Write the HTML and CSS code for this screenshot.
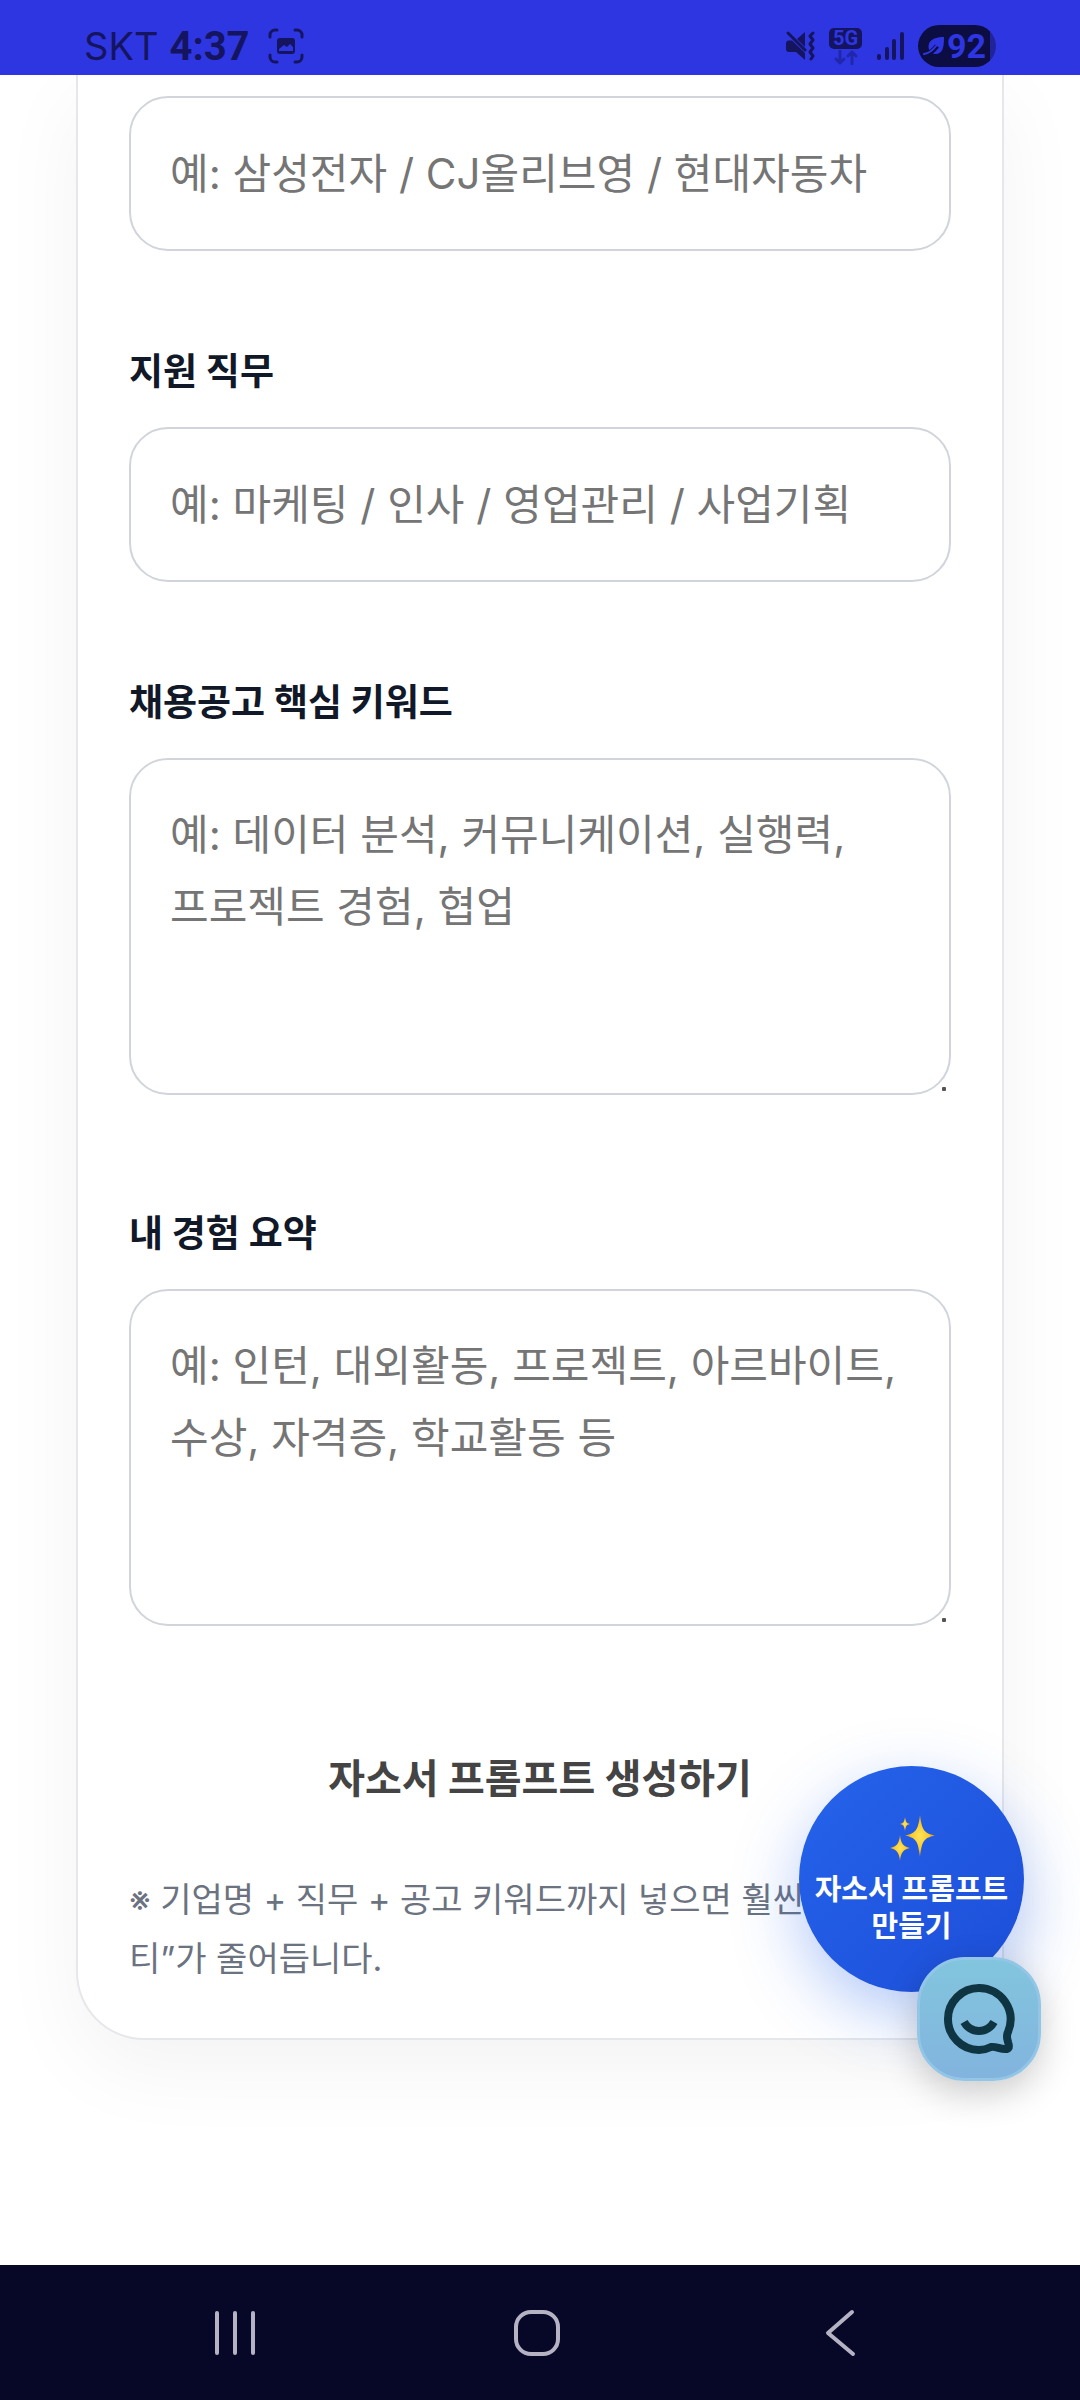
FILE: index.html
```html
<!DOCTYPE html>
<html lang="ko">
<head>
  <meta charset="UTF-8">
  <meta name="viewport" content="width=device-width, initial-scale=1">
  <title>자소서 프롬프트 생성기</title>
  <link rel="stylesheet" href="styles.css">
</head>
<body>
  <header class="status-bar">
    <div class="status-left">
      <span class="carrier">SKT</span>
      <span class="clock">4:37</span>
      <svg class="capture-icon" width="36" height="36" viewBox="0 0 36 36" fill="none" stroke="#14145f" stroke-width="3" stroke-linecap="round">
        <path d="M2 9V7a5 5 0 0 1 5-5h2M27 2h2a5 5 0 0 1 5 5v2M34 27v2a5 5 0 0 1-5 5h-2M9 34H7a5 5 0 0 1-5-5v-2"/>
        <rect x="9" y="10" width="18" height="16" rx="3" fill="#14145f" stroke="none"/>
        <path d="M11 23v-2l5-4 3 2 3-3 3 3v4z" fill="#2e36e2" stroke="none"/>
      </svg>
    </div>
    <div class="status-right">
      <svg width="30" height="30" viewBox="0 0 30 30">
        <path d="M20 1v15l-8-8zM1 9.500h6L20 22v7l-9-8H4q-3 0-3-3v-6q0-2 2-2.500z" fill="#14145f"/>
        <path d="M3 2l19 19" stroke="#2e36e2" stroke-width="3"/>
        <path d="M3 2l17 17" stroke="#14145f" stroke-width="3" stroke-linecap="round"/>
        <path d="M28 2l-3 3 3 4-3 4 3 4-3 4 3 4-2 3" fill="none" stroke="#14145f" stroke-width="3" stroke-linecap="round" stroke-linejoin="round"/>
      </svg>
      <div class="network">
        <span class="network-type">5G</span>
        <svg width="24" height="15" viewBox="0 0 24 15" fill="none" stroke="#2127ac" stroke-width="3" stroke-linecap="round" stroke-linejoin="round">
          <path d="M6 1v12M2 9l4 4 4-4M18 14V2M14 6l4-4 4 4"/>
        </svg>
      </div>
      <svg width="28" height="30" viewBox="0 0 28 30" stroke="#14145f" stroke-width="4" stroke-linecap="round">
        <path d="M3 25v2M11 18v9"/>
        <path d="M18 10v17M26 3v24"/>
      </svg>
      <div class="battery">
        <svg width="22" height="20" viewBox="0 0 22 20">
          <path d="M21 1c0 10-1 17-9 17-3 0-4-1-5-2C3 8 7 1 21 1z" fill="#2e36e2"/>
          <path d="M1 18c6 0 9-3 13-8" fill="none" stroke="#0c0d42" stroke-width="5"/>
          <path d="M1 18c6-1 9-4 12-8" fill="none" stroke="#2e36e2" stroke-width="2" stroke-linecap="round"/>
        </svg>
        <span>92</span>
      </div>
    </div>
  </header>

  <main class="page">
    <form class="card">
      <div class="field">
        <input type="text" id="company" aria-label="지원 기업" placeholder="예: 삼성전자 / CJ올리브영 / 현대자동차">
      </div>
      <div class="field">
        <label for="job">지원 직무</label>
        <input type="text" id="job" placeholder="예: 마케팅 / 인사 / 영업관리 / 사업기획">
      </div>
      <div class="field">
        <label for="keywords">채용공고 핵심 키워드</label>
        <div class="area">
          <textarea id="keywords" placeholder="예: 데이터 분석, 커뮤니케이션, 실행력, 프로젝트 경험, 협업"></textarea>
        </div>
      </div>
      <div class="field">
        <label for="experience">내 경험 요약</label>
        <div class="area">
          <textarea id="experience" placeholder="예: 인턴, 대외활동, 프로젝트, 아르바이트, 수상, 자격증, 학교활동 등"></textarea>
        </div>
      </div>
      <button type="button" class="generate">자소서 프롬프트 생성하기</button>
      <p class="note">※ 기업명 + 직무 + 공고 키워드까지 넣으면 훨씬<br>티”가 줄어듭니다.</p>
    </form>
  </main>

  <a href="#company" class="fab">
    <svg width="46" height="48" viewBox="0 0 46 48">
      <defs>
        <radialGradient id="gold">
          <stop offset="0" stop-color="#ffe35e"/>
          <stop offset="0.6" stop-color="#fbc926"/>
          <stop offset="1" stop-color="#d98a1c"/>
        </radialGradient>
      </defs>
      <g fill="url(#gold)">
        <path d="M31 1c2 14 3 18 15 20.500C34 24 33 28 31 43c-2-15-3-19-15-21.500C28 19 29 15 31 1z"/>
        <path d="M11 21c1 9 3 11 10 13-7 2-9 4-10 13-1-9-3-11-10-13 7-2 9-4 10-13z"/>
        <path d="M16 3c1 5 1 6 5 7-4 1-4 2-5 7-1-5-1-6-5-7 4-1 4-2 5-7z"/>
      </g>
    </svg>
    <span>자소서 프롬프트<br>만들기</span>
  </a>

  <button type="button" class="chat" aria-label="채팅 상담">
    <svg width="72" height="72" viewBox="0 0 72 72" fill="none" stroke="#0f3442" stroke-width="8" stroke-linejoin="round">
      <path d="M36 5a31 31 0 1 0 0 62c5 0 8-1 12-3 5-1 10 3 16 2 3-1 2-4 1-7-1-4-2-6 0-10C74 27 58 5 36 5z"/>
      <path d="M21 39c7 12 23 12 30 0"/>
    </svg>
  </button>

  <nav class="nav-bar">
    <button type="button" aria-label="최근 앱">
      <svg width="48" height="48" viewBox="0 0 48 48"><path d="M6 4v40M24 4v40M42 4v40"/></svg>
    </button>
    <button type="button" aria-label="홈">
      <svg width="48" height="48" viewBox="0 0 48 48"><rect x="3" y="3" width="42" height="42" rx="15"/></svg>
    </button>
    <button type="button" aria-label="뒤로">
      <svg width="48" height="48" viewBox="0 0 48 48"><path d="M36 3L12 24l25 21"/></svg>
    </button>
  </nav>
</body>
</html>
```
FILE: styles.css
```css
* {
  box-sizing: border-box;
}
body {
  margin: 0;
  min-height: 100vh;
  display: flex;
  flex-direction: column;
  font-family: Inter, "Noto Sans CJK KR", sans-serif;
  background: #fff;
  color: #111827;
  position: relative;
}
button {
  border: 0;
  padding: 0;
  background: none;
  font-family: inherit;
  cursor: pointer;
}
svg {
  display: block;
  flex-shrink: 0;
}

/* status bar */
.status-bar {
  position: sticky;
  top: 0;
  z-index: 2;
  height: 75px;
  padding: 17px 84px 0;
  display: flex;
  justify-content: space-between;
  background: #2e36e2;
  color: #14145f;
}
.status-left,
.status-right {
  display: flex;
  align-items: center;
}
.status-left {
  gap: 11px;
  font-size: 38px;
}
.clock {
  font-family: Roboto, sans-serif;
  font-size: 40px;
  font-weight: 700;
}
.capture-icon {
  margin-left: 7px;
}
.status-right {
  gap: 14px;
}
.network {
  display: flex;
  flex-direction: column;
  align-items: center;
  gap: 1px;
}
.network-type {
  width: 33px;
  border-radius: 5px;
  background: #14145f;
  color: #2e36e2;
  font-family: Roboto, sans-serif;
  font-size: 20px;
  font-weight: 700;
  line-height: 21px;
  text-align: center;
}
.battery {
  width: 78px;
  height: 42px;
  padding-left: 5px;
  border-radius: 21px;
  display: flex;
  align-items: center;
  gap: 2px;
  background: linear-gradient(to right, #0c0d42 92%, #20239a 92%);
  color: #2e36e2;
  font-family: Roboto, sans-serif;
  font-size: 34px;
  font-weight: 700;
}

/* form */
.page {
  flex: 1;
  padding: 0 76px 225px;
  overflow: hidden;
}
.card {
  padding: 21px 51px 50px;
  border: 2px solid #e5e7eb;
  border-top: 0;
  border-radius: 0 0 68px 68px;
  background: #fff;
  box-shadow: 0 28px 84px rgba(0, 0, 0, 0.05);
}
.field {
  margin-bottom: 90px;
}
label {
  display: block;
  margin-bottom: 24px;
  font-size: 37px;
  font-weight: 700;
  line-height: 62px;
}
input,
textarea {
  display: block;
  width: 100%;
  padding: 39px;
  border: 2px solid #d1d5db;
  border-radius: 39px;
  background: #fff;
  color: #111827;
  font-family: inherit;
  font-size: 42px;
  line-height: 72px;
}
input {
  height: 155px;
}
textarea {
  height: 337px;
  resize: none;
  overflow: hidden;
  word-break: keep-all;
}
::placeholder {
  color: #757575;
  opacity: 1;
}
.area {
  position: relative;
  margin-bottom: 108px;
}
/* resize grip */
.area::after {
  content: "";
  position: absolute;
  right: 5px;
  bottom: 4px;
  width: 4px;
  height: 4px;
  border-radius: 1px;
  background: #555;
}
.generate {
  display: block;
  width: 100%;
  height: 84px;
  margin-bottom: 52px;
  color: #444;
  font-size: 40px;
  font-weight: 700;
}
.note {
  margin: 0;
  color: #6b7280;
  font-size: 34px;
  line-height: 59px;
}

/* floating buttons */
.fab {
  position: absolute;
  right: 56px;
  bottom: 408px;
  width: 225px;
  height: 226px;
  border-radius: 50%;
  display: flex;
  flex-direction: column;
  align-items: center;
  justify-content: center;
  gap: 9px;
  background: linear-gradient(135deg, #2563eb, #1d4ed8);
  box-shadow: 0 22px 66px rgba(37, 99, 235, 0.35);
  color: #fff;
  font-size: 29px;
  font-weight: 700;
  line-height: 37px;
  text-align: center;
  text-decoration: none;
  white-space: nowrap;
}
.chat {
  position: absolute;
  right: 39px;
  bottom: 319px;
  width: 124px;
  height: 124px;
  border: 3px solid #92c5e6;
  border-radius: 48px;
  display: flex;
  align-items: center;
  justify-content: center;
  background: linear-gradient(#82c5de, #82b4de);
  box-shadow: 0 12px 36px rgba(0, 0, 0, 0.2);
}

/* system navigation */
.nav-bar {
  height: 135px;
  padding: 0 20% 0 19.5%;
  display: flex;
  align-items: center;
  justify-content: space-between;
  background: #070828;
}
.nav-bar svg {
  fill: none;
  stroke: #b5b3c3;
  stroke-width: 4;
  stroke-linecap: round;
  stroke-linejoin: round;
}
```
